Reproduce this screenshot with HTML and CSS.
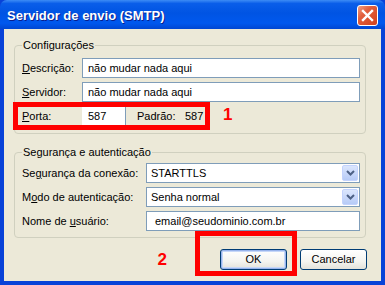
FILE: index.html
```html
<!DOCTYPE html>
<html lang="pt-BR">
<head>
  <meta charset="UTF-8" />
  <title>Servidor de envio (SMTP)</title>
  <link rel="stylesheet" href="styles.css">
</head>
<body>
  <div class="window">
    <div class="titlebar">
      <span class="title">Servidor de envio (SMTP)</span>
      <span class="close-btn">
        <svg width="13" height="13" viewBox="0 0 13 13">
          <path d="M2 2 L11 11 M11 2 L2 11" stroke="#fff" stroke-width="2.4" stroke-linecap="square" />
        </svg>
      </span>
    </div>

    <div class="client">
      <fieldset class="group group-config">
        <legend>Configurações</legend>

        <div class="row">
          <label><u>D</u>escrição:</label>
          <div class="textbox">não mudar nada aqui</div>
        </div>

        <div class="row">
          <label><u>S</u>ervidor:</label>
          <div class="textbox">não mudar nada aqui</div>
        </div>

        <div class="row porta-row">
          <span class="mark-box"></span>
          <label class="porta-label"><u>P</u>orta:</label>
          <div class="porta-field">587</div>
          <span class="padrao">Padrão:</span>
          <span class="padrao-val">587</span>
          <span class="mark-num">1</span>
        </div>
      </fieldset>

      <fieldset class="group group-sec">
        <legend>Segurança e autenticação</legend>

        <div class="row">
          <label>Se<u>g</u>urança da conexão:</label>
          <div class="combo">
            <span>STARTTLS</span>
            <span class="combo-btn">
              <svg width="9" height="6" viewBox="0 0 9 6"><path d="M1 1 L4.5 4.5 L8 1" fill="none" stroke="#4d6185" stroke-width="2" /></svg>
            </span>
          </div>
        </div>

        <div class="row">
          <label>M<u>o</u>do de autenticação:</label>
          <div class="combo">
            <span>Senha normal</span>
            <span class="combo-btn">
              <svg width="9" height="6" viewBox="0 0 9 6"><path d="M1 1 L4.5 4.5 L8 1" fill="none" stroke="#4d6185" stroke-width="2" /></svg>
            </span>
          </div>
        </div>

        <div class="row">
          <label>Nome de <u>u</u>suário:</label>
          <div class="textbox email">email@seudominio.com.br</div>
        </div>
      </fieldset>

      <div class="footer">
        <span class="mark-num num-2">2</span>
        <div class="ok-wrap">
          <span class="mark-box box-2"></span>
          <button class="btn btn-default">OK</button>
        </div>
        <button class="btn">Cancelar</button>
      </div>
    </div>
  </div>
</body>
</html>
```

FILE: styles.css
```css
* {
  box-sizing: border-box;
}

body {
  margin: 0;
  font-family: 'Liberation Sans', Arial, sans-serif;
  font-size: 11px;
  color: #000;
  background: #fff;
}

.window {
  width: 385px;
  height: 285px;
  background: #0842d8;
  display: flex;
  flex-direction: column;
}

/* Barra de titulo estilo XP */
.titlebar {
  height: 29px;
  display: flex;
  align-items: center;
  justify-content: space-between;
  padding: 0 7px 0 7px;
  background: linear-gradient(to bottom, #3d8cf5 0%, #0a5ee9 12%, #0054e3 45%, #0058ee 80%, #0046d2 100%);
  border-radius: 7px 7px 0 0;
}

.title {
  color: #fff;
  font-weight: bold;
  font-size: 13px;
  text-shadow: 1px 1px 0 #0a1e8c;
  padding-top: 1px;
}

.close-btn {
  width: 21px;
  height: 21px;
  border: 1px solid #fff;
  border-radius: 3px;
  background: linear-gradient(135deg, #f0a084 0%, #e2603e 35%, #d1401c 100%);
  display: flex;
  align-items: center;
  justify-content: center;
  margin-top: 2px;
}

.client {
  flex: 1;
  margin: 0 4px 4px 4px;
  background: #ece9d8;
  padding-top: 10px;
}

.group {
  margin: 0 15px 0 10px;
  border: 1px solid #d0d0bf;
  border-radius: 4px;
  padding: 6px 5px 7px 7px;
  display: flex;
  flex-direction: column;
  gap: 4px;
}

.group legend {
  padding: 0 1px;
  margin-left: 0;
  line-height: 13px;
}

.group-sec {
  margin-top: 12px;
  padding-top: 4px;
  padding-bottom: 6px;
}

.row {
  display: grid;
  grid-template-columns: 60px 1fr;
  align-items: center;
  height: 20px;
}

.group-sec .row {
  grid-template-columns: 124px 1fr;
}

.textbox {
  height: 20px;
  border: 1px solid #7f9db9;
  background: #fff;
  padding: 0 5px;
  line-height: 18px;
  white-space: nowrap;
}

.textbox.email {
  padding-left: 8px;
}

/* Linha da porta com marcacao vermelha */
.porta-row {
  position: relative;
  display: flex;
}

.porta-label {
  width: 60px;
}

.porta-field {
  width: 44px;
  height: 18px;
  background: #fff;
  border-right: 1px solid #7f9db9;
  padding-left: 6px;
  line-height: 18px;
}

.padrao {
  margin-left: 11px;
  width: 48px;
}

.padrao-val {
  width: 27px;
}

.mark-box {
  position: absolute;
  left: -9px;
  top: -4px;
  width: 197px;
  height: 28px;
  border: 5px solid #ff0000;
}

.mark-num {
  color: #ff0000;
  font-weight: bold;
  font-size: 17px;
  margin-left: 11px;
  margin-top: -2px;
}

.combo {
  height: 20px;
  border: 1px solid #7f9db9;
  background: #fff;
  display: flex;
  align-items: center;
  justify-content: space-between;
  padding: 0 1px 0 4px;
}

.combo-btn {
  width: 16px;
  height: 16px;
  border-radius: 2px;
  background: linear-gradient(to bottom, #dbe6fd, #b7cbf7);
  border: 1px solid #c3d3fd;
  display: flex;
  align-items: center;
  justify-content: center;
}

.footer {
  display: flex;
  justify-content: flex-end;
  align-items: center;
  gap: 13px;
  margin-top: 10px;
  padding-right: 14px;
}

.num-2 {
  margin: 2px 40px 0 0;
}

.ok-wrap {
  position: relative;
}

.box-2 {
  left: -25px;
  top: -18px;
  width: 102px;
  height: 45px;
}

.btn {
  width: 67px;
  height: 21px;
  font-family: inherit;
  font-size: 11px;
  border: 1px solid #003c74;
  border-radius: 3px;
  background: linear-gradient(to bottom, #ffffff 0%, #f4f4f0 60%, #e3e2da 100%);
  padding: 0;
  display: block;
}

.btn-default {
  box-shadow: inset 0 0 0 1px #98b4ec, inset 0 0 0 2px #c6d7f8;
}
```
